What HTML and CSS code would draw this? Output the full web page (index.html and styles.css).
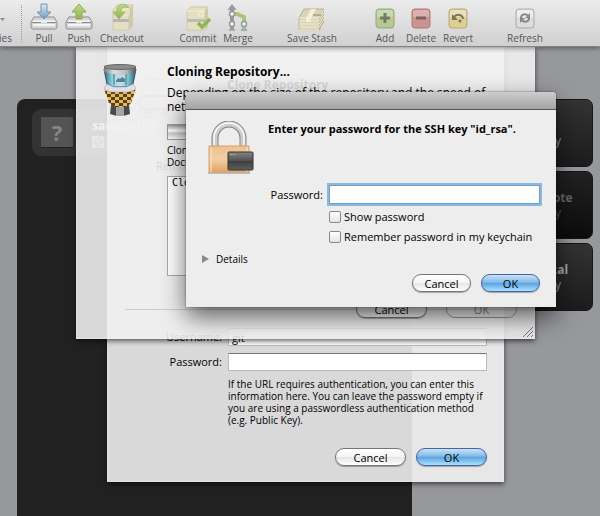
FILE: index.html
```html
<!DOCTYPE html>
<html lang="en">
<head>
<meta charset="utf-8">
<title>Clone Repository</title>
<link rel="stylesheet" href="styles.css">
</head>
<body>
<svg class="defs" aria-hidden="true">
  <defs>
    <linearGradient id="metal" x2="0" y2="1"><stop stop-color="#f8f8f8"/><stop offset=".45" stop-color="#d5d5d5"/><stop offset="1" stop-color="#aaa"/></linearGradient>
    <linearGradient id="blue" x2="0" y2="1"><stop stop-color="#dcebf6"/><stop offset="1" stop-color="#7099bd"/></linearGradient>
    <linearGradient id="green" x2="0" y2="1"><stop stop-color="#c0dc83"/><stop offset="1" stop-color="#8eb648"/></linearGradient>
    <linearGradient id="gold" x2="0" y2="1"><stop stop-color="#efc08c"/><stop offset=".5" stop-color="#f3cfa4"/><stop offset="1" stop-color="#e2a263"/></linearGradient>
    <linearGradient id="drive" x2="0" y2="1"><stop stop-color="#858585"/><stop offset=".5" stop-color="#505050"/><stop offset=".52" stop-color="#3f3f3f"/><stop offset="1" stop-color="#606060"/></linearGradient>
    <linearGradient id="steel"><stop stop-color="#777"/><stop offset=".3" stop-color="#ddd"/><stop offset=".7" stop-color="#bbb"/><stop offset="1" stop-color="#555"/></linearGradient>
    <linearGradient id="glass"><stop stop-color="#1c6c85"/><stop offset=".25" stop-color="#8fd0de"/><stop offset=".5" stop-color="#bfe4ea"/><stop offset=".75" stop-color="#7fc3d4"/><stop offset="1" stop-color="#17637d"/></linearGradient>
    <pattern id="checks" width="8" height="6" patternUnits="userSpaceOnUse"><path fill="#4b4131" d="M0 0h8v6H0z"/><path fill="#f3b93c" d="M0 0h4v3H0zM4 3h4v3H4z"/></pattern>
  </defs>
</svg>

<header class="toolbar">
  <button class="tool tool-cut"><svg width="8" height="32" viewBox="0 0 8 32"><path d="M0 18h5l-2.500 3z" fill="#888"/></svg><span>ies</span></button>
  <i class="tool-rule"></i>
  <button class="tool"><svg width="28" height="32" viewBox="0 0 28 32"><path d="M4 17h20l3 5v5q0 2-2 2H3q-2 0-2-2v-5z" fill="#d6d6d6" stroke="#8c8c8c"/><path d="M2.500 21.500h23M3 25h22" stroke="#f4f4f4" stroke-width="2"/><path d="M2 22.500h9m6 0h9" stroke="#888"/><path d="M11 4h6v8h4l-7 7-7-7h4z" fill="url(#blue)" stroke="#7693aa"/></svg><span>Pull</span></button>
  <button class="tool"><svg width="28" height="32" viewBox="0 0 28 32"><path d="M4 17h20l3 5v5q0 2-2 2H3q-2 0-2-2v-5z" fill="#d6d6d6" stroke="#8c8c8c"/><path d="M2.500 21.500h23M3 25h22" stroke="#f4f4f4" stroke-width="2"/><path d="M2 22.500h9m6 0h9" stroke="#888"/><path d="M11 19h6v-7h4l-7-8-7 8h4z" fill="url(#green)" stroke="#8baa55"/></svg><span>Push</span></button>
  <button class="tool"><svg width="28" height="32" viewBox="0 0 28 32"><path d="M5 10l4-5h16l-4 5v20H5z" fill="#e3dfc0" stroke="#cfcaac"/><path d="M21 10l4-5v21l-4 4z" fill="#cec9a8"/><path d="M16 9h5v6h-5z" fill="none" stroke="#f1edcf"/><path d="M5 19h16v3H5z" fill="#b5b5b5"/><path d="M21 8C18 2 8 3 9 12H5l6 7 6-7h-4c-1-5 3-6 8-4z" fill="url(#green)" stroke="#9db970"/></svg><span>Checkout</span></button>
  <i></i>
  <button class="tool"><svg width="28" height="32" viewBox="0 0 28 32"><path d="M3 11l4-4h17l-3 4v19H3z" fill="#e3dfc0" stroke="#cfcaac"/><path d="M21 11l3-4v20l-3 3z" fill="#cec9a8"/><path d="M3 19h18v3H3z" fill="#bbb"/><path d="M3 11h18M15 12h4v4h-4z" fill="none" stroke="#f5f1d0"/><path d="M14 23l4 4 8-8" fill="none" stroke="#8fb64e" stroke-width="3.500"/></svg><span>Commit</span></button>
  <button class="tool"><svg width="28" height="32" viewBox="0 0 28 32"><path d="M8 29V9" stroke="#999" stroke-width="4"/><path d="M3.500 10L8 4l4.500 6z" fill="#999"/><path d="M8 14h5l7 3v12" fill="none" stroke="#a9c574" stroke-width="4"/><g fill="#f7f7f7" stroke="#999" stroke-width="1.500"><circle cx="8" cy="14" r="2.500"/><circle cx="8" cy="24" r="2.500"/><circle cx="20" cy="24" r="2.500"/></g><path d="M5 30h6m6 0h6" stroke="#777"/></svg><span>Merge</span></button>
  <i></i>
  <button class="tool"><svg width="28" height="32" viewBox="0 0 28 32"><path d="M1 18l5-9h20l-4 9v12H1z" fill="#dad4b5" stroke="#b8b296"/><path d="M21 18l5-9v13l-5 8z" fill="#b5ae8d"/><path d="M1 18h20l5-8M1 21h20l5-8M1 24h20l5-8M1 27h20l5-8M1 30h20" fill="none" stroke="#f1edd4"/><path d="M8 18l5-9h5l-5 9v4H8z" fill="#f3efd8"/><path d="M15 15h8" stroke="#8a876f"/></svg><span>Save Stash</span></button>
  <i></i>
  <button class="tool"><svg width="28" height="32" viewBox="0 0 28 32"><rect x="5" y="9" width="18" height="19" rx="3" fill="#b6cb93" stroke="#92a575"/><path d="M6 12q0-2 2-2h12q2 0 2 2v5H6z" fill="#c9d9af"/><path d="M14 13v10M9 18h10" stroke="#727b64" stroke-width="3"/></svg><span>Add</span></button>
  <button class="tool"><svg width="28" height="32" viewBox="0 0 28 32"><rect x="5" y="9" width="18" height="19" rx="3" fill="#cc9290" stroke="#a97876"/><path d="M6 12q0-2 2-2h12q2 0 2 2v5H6z" fill="#dcb1ae"/><path d="M9 18h10" stroke="#7e6260" stroke-width="3"/></svg><span>Delete</span></button>
  <button class="tool"><svg width="28" height="32" viewBox="0 0 28 32"><rect x="5" y="9" width="18" height="19" rx="3" fill="#ddcf94" stroke="#b6a77a"/><path d="M6 12q0-2 2-2h12q2 0 2 2v5H6z" fill="#eae2b7"/><path d="M10 17c3-4 9-2 9 2" fill="none" stroke="#7c7559" stroke-width="2"/><path d="M8 14v6h6z" fill="#7c7559"/><circle cx="16" cy="21" r="1.500" fill="#7c7559"/></svg><span>Revert</span></button>
  <i></i>
  <button class="tool"><svg width="28" height="32" viewBox="0 0 28 32"><rect x="5" y="9" width="18" height="19" rx="3" fill="#ddd" stroke="#aaa"/><path d="M6 12q0-2 2-2h12q2 0 2 2v5H6z" fill="#eee"/><path d="M10 18c0-4 5-5 7-2m1 2c0 4-5 5-7 2" fill="none" stroke="#888" stroke-width="2"/><path d="M19 13v5h-5zM9 23v-5h5z" fill="#888"/></svg><span>Refresh</span></button>
</header>

<main class="desktop">
  <section class="bookmarks">
    <div class="bookmark"><span class="unknown">?</span><div><strong>sample101</strong><span class="home"><svg width="12" height="12" viewBox="0 0 12 12"><path d="M2 6l4-4 4 4H8v4H4V6z" fill="none" stroke="#333"/></svg></span></div></div>
  </section>
  <nav class="actions">
    <button class="action"><strong>Add</strong>Repository</button>
    <button class="action action-dim"><strong>Clone Remote</strong>Repository</button>
    <button class="action"><strong>Create Local</strong>Repository</button>
  </nav>

  <form class="sheet clone">
    <div class="clone-head"><svg width="54" height="44" viewBox="0 0 54 44"><path d="M8 2h36l8 17v21H2V19z" fill="#d5d5d5" stroke="#888"/><path d="M2 19h50M2 32h50" stroke="#777" stroke-width="2"/><path d="M4 38l5-6h8l-5 6zm17 0l5-6h8l-5 6z" fill="#caa638"/></svg><h2>Clone Repository</h2></div>
    <p class="remote">Remote</p>
    <div class="fields">
      <label for="user">Username:</label><input id="user" value="git">
      <label for="pass">Password:</label><input id="pass" type="password">
      <p>If the URL requires authentication, you can enter this information here. You can leave the password empty if you are using a passwordless authentication method (e.g. Public Key).</p>
    </div>
    <div class="buttons"><button type="button" class="btn">Cancel</button><button type="button" class="btn btn-ok">OK</button></div>
  </form>

  <section class="sheet progress">
    <div class="progress-top">
      <svg width="34" height="54" viewBox="0 0 34 54"><path d="M1 5l3 15 7 3h12l7-3 3-15z" fill="url(#glass)" stroke="#35525d"/><path d="M12 9h11v10H12z" fill="#b9dce1"/><path d="M13 17l2-3 2 1 2-2 3 2v3h-9z" fill="#57818c"/><path d="M11 8v13m12-13v13" stroke="#397486"/><path d="M1 3v5q16 5 32 0V3z" fill="url(#steel)"/><ellipse cx="17" cy="3" rx="16" ry="2.500" fill="#8c8c8c" stroke="#666"/><path d="M1 25q16 5 32 0l-5 14-5 5H12l-6-5z" fill="url(#checks)"/><path d="M4 20l7 3h12l7-3 3 4q-1 3-8 4H9q-7-1-8-4z" fill="#dfdfeb" stroke="#999" stroke-width=".5"/><path d="M8 41l5 2h8l5-2 1 9q-10 4-20 0z" fill="#4a4a4a"/><path d="M13 43h8v9h-8z" fill="#a5a5a5"/></svg>
      <div class="progress-body">
        <h2>Cloning Repository...</h2>
        <p>Depending on the size of the repository and the speed of<br>network, this may take a while.</p>
        <div class="bar"></div>
        <p class="status">Cloning into<br>Documents</p>
        <textarea class="log" aria-label="Log" readonly>Cloning</textarea>
      </div>
    </div>
    <hr>
    <div class="buttons"><button class="btn">Cancel</button><button class="btn" disabled>OK</button></div>
    <svg class="grip" width="10" height="10" viewBox="0 0 10 10"><path d="M0 10L10 0M4 10l6-6M8 10l2-2" stroke="#777"/></svg>
  </section>

  <form class="dialog">
    <div class="titlebar"></div>
    <div class="dialog-body">
      <div class="dialog-head">
        <svg width="48" height="54" viewBox="0 0 48 54"><path d="M7 25V17a14 14 0 0 1 28 0v8" fill="none" stroke="#858585" stroke-width="7"/><path d="M7 25V17a14 14 0 0 1 28 0v8" fill="none" stroke="#cdcdcd" stroke-width="5"/><path d="M6 24V17a15 15 0 0 1 30 0v7" fill="none" stroke="#fafafa" stroke-width="1.500"/><path d="M0 52h42" stroke="#bbb" stroke-width="2"/><path d="M1 25h40v26H1z" fill="url(#gold)" stroke="#d6a26a"/><path d="M3 26v25M39 26v25" stroke="#fbe5cb"/><rect x="20" y="31" width="25" height="18" rx="1" fill="url(#drive)" stroke="#333"/><path d="M22 33.500h6" stroke="#87c276" stroke-dasharray="2 .5"/></svg>
        <h1>Enter your password for the SSH key "id_rsa".</h1>
      </div>
      <div class="secret">
        <label for="key">Password:</label><input id="key" type="password">
        <label class="check"><input type="checkbox">Show password</label>
        <label class="check"><input type="checkbox">Remember password in my keychain</label>
      </div>
      <button type="button" class="details"><svg width="7" height="8" viewBox="0 0 7 8"><path d="M0 0l7 4-7 4z" fill="#888"/></svg>Details</button>
      <div class="buttons"><button type="button" class="btn">Cancel</button><button type="button" class="btn btn-ok">OK</button></div>
    </div>
  </form>
</main>
</body>
</html>
```
FILE: styles.css
```css
* { box-sizing: border-box; }
body, h1, h2, p { margin: 0; }
body {
  height: 100vh;
  display: flex;
  flex-direction: column;
  overflow: hidden;
  font: 500 11px/14px "Open Sans", "Noto Sans", sans-serif;
  color: #000;
}
button, input, textarea { font: inherit; color: inherit; }
button { border: 0; padding: 0; background: none; }
h1 { font-size: 11px; line-height: 16px; font-weight: 700; }
h2 { font-size: 12px; line-height: 16px; font-weight: 700; }
.defs { position: absolute; width: 0; height: 0; }

.toolbar {
  position: relative;
  z-index: 1;
  display: grid;
  grid-template-columns: 12px 16px 32px 38px 48px 32px 40px 40px 22px 64px 24px 34px 38px 36px 24px 50px;
  height: 47px;
  background: linear-gradient(#ececec, #d0d0d0);
  border-bottom: 1px solid #858585;
  box-shadow: 0 1px 5px rgba(0, 0, 0, .45);
}
.tool {
  display: flex;
  flex-direction: column;
  align-items: center;
  font-size: 10px;
  line-height: 12px;
  color: #555;
  white-space: nowrap;
}
.tool svg { flex: none; }
.tool-cut { align-items: flex-end; }
.tool-cut svg { align-self: flex-start; }
.tool-rule { margin: 5px 6px 4px 9px; border-left: 1px dotted #999; }

.desktop { position: relative; flex: 1; background: #97989c; }

.bookmarks {
  position: absolute;
  left: 17px; top: 52px; bottom: 0;
  width: 395px;
  padding: 10px 15px;
  background: #212121;
  border-radius: 8px 8px 0 0;
}
.bookmark {
  display: flex;
  gap: 19px;
  padding: 8px 9px;
  border-radius: 9px;
  background: #333;
  color: #fff;
}
.bookmark strong { display: block; font-size: 12px; line-height: 16px; padding-top: 1px; }
.unknown {
  width: 32px; height: 31px;
  background: #545454;
  border-bottom: 1px solid #222;
  color: #858585;
  font: 700 22px/30px "Open Sans", sans-serif;
  text-align: center;
}
.home { display: block; width: 12px; height: 12px; margin-top: 2px; background: #999; }

.actions {
  position: absolute;
  left: 469px; top: 52px;
  width: 124px;
  display: grid;
  gap: 4px;
}
.action {
  display: flex;
  flex-direction: column;
  align-items: center;
  height: 68px;
  padding-top: 18px;
  border-radius: 7px;
  background: linear-gradient(#333, #1c1c1c);
  border: 1px solid #161616;
  color: #999;
  font-size: 12px;
  line-height: 15px;
}
.action strong { color: #aaa; }
.action-dim { background: linear-gradient(#222, #0c0c0c); color: #555; }
.action-dim strong { color: #666; }

.sheet {
  position: absolute;
  top: 0;
  background: rgba(240, 240, 240, .89);
  border: 1px solid rgba(240, 240, 240, .4);
  border-top: 0;
  box-shadow: 0 2px 5px rgba(0, 0, 0, .6);
}
.buttons { display: flex; justify-content: flex-end; gap: 10px; }
.btn {
  width: 71px; height: 18px;
  border: 1px solid #777;
  border-radius: 9px;
  background: linear-gradient(#fff, #f5f5f5 48%, #e6e6e6 52%, #fff);
  box-shadow: 0 1px 1px rgba(0, 0, 0, .3);
  line-height: 15px;
  font-size: 11px;
}
.btn-ok {
  border-color: #4b60a8;
  background: linear-gradient(#c9e3f7, #82baea 45%, #5ca4df 52%, #a9e2ff);
}
.btn:disabled { background: rgba(255, 255, 255, .15); border-color: #999; color: #888; box-shadow: none; }

.clone { left: 107px; width: 397px; padding: 30px 16px 15px 17px; }
.clone-head { display: flex; gap: 35px; height: 82px; padding-left: 13px; }
.clone-head svg { opacity: .5; }
.remote { padding-left: 31px; height: 169px; }
.fields {
  display: grid;
  grid-template-columns: 97px 1fr;
  gap: 7px 6px;
  align-items: center;
}
.fields label { text-align: right; line-height: 18px; }
.fields input {
  min-width: 0;
  height: 18px;
  padding: 0 3px;
  border: 1px solid #bbb;
  border-top-color: #777;
  background: #fff;
  outline: 0;
}
.fields p { grid-column: 2; font-size: 10px; line-height: 12px; }
.clone .buttons { margin-top: 22px; }

.progress { left: 76px; width: 459px; padding: 17px 17px 20px; }
.progress-top { display: flex; gap: 30px; padding-left: 9px; }
.progress-top > svg { flex: none; }
.progress-body { flex: 1; }
.progress p { margin-top: 6px; font-size: 12px; }
.bar {
  height: 16px;
  margin-top: 10px;
  border: 1px solid #999;
  background: linear-gradient(#999, #fff 40%, #ccc 60%, #fff);
}
.progress .status { margin-top: 4px; font-size: 10px; line-height: 12px; }
.log {
  display: block;
  width: 100%; height: 100px;
  margin-top: 8px;
  padding: 0 4px;
  border: 1px solid #aaa;
  background: #fff;
  resize: none;
  font: 10px/12px "DejaVu Sans Mono", monospace;
}
.progress hr { margin: 33px 0 0 31px; border: 0; border-top: 1px solid #ccc; }
.progress .buttons { gap: 19px; margin-top: -10px; }
.grip { position: absolute; right: 1px; bottom: 1px; }

.dialog {
  position: absolute;
  left: 186px; top: 45px;
  width: 370px;
  border-radius: 4px 4px 0 0;
  background: #ededed;
  box-shadow: 0 10px 24px rgba(0, 0, 0, .6), 0 0 2px rgba(0, 0, 0, .6);
}
.titlebar {
  height: 18px;
  border-radius: 4px 4px 0 0;
  border-bottom: 1px solid #555;
  background: linear-gradient(#cdcdcd, #a3a3a3);
}
.dialog-body { padding: 11px 16px 15px; }
.dialog-head { display: flex; gap: 12px; padding-left: 6px; }
.dialog-head h1 { white-space: nowrap; }
.secret {
  display: grid;
  grid-template-columns: 121px 1fr;
  gap: 6px;
  align-items: center;
  margin-top: 10px;
}
.secret > label:first-child { text-align: right; }
.secret > input {
  min-width: 0;
  height: 19px;
  border: 1px solid #6ba0d0;
  background: #fff;
  outline: 0;
  box-shadow: 0 0 0 2px #8ab8e0;
}
.check { grid-column: 2; display: flex; align-items: center; gap: 3px; line-height: 14px; }
.check input {
  appearance: none;
  width: 12px; height: 12px;
  margin: 0;
  border: 1px solid #888;
  border-radius: 2px;
  background: linear-gradient(#fff, #e4e4e4);
}
.details { display: flex; align-items: center; gap: 7px; margin-top: 8px; font-size: 10px; line-height: 14px; }
.dialog .buttons { margin-top: 8px; }
.dialog .btn { width: 59px; }
```
